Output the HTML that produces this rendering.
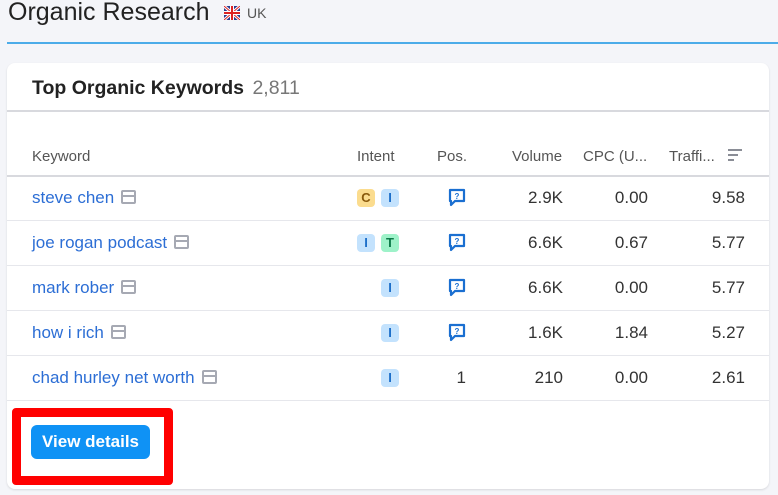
<!DOCTYPE html>
<html><head><style>
*{margin:0;padding:0;box-sizing:border-box}
body{width:778px;height:495px;background:#f4f5f9;font-family:"Liberation Sans",sans-serif;position:relative;overflow:hidden;color:#333}
.abs{position:absolute;white-space:nowrap}
.card{position:absolute;left:7px;top:63px;width:762px;height:426px;background:#fff;border-radius:8px;box-shadow:0 1px 2px rgba(0,0,0,.12)}
.kw{color:#2c6ed5;font-size:17px}
.ic{display:inline-block;width:15px;height:14px;border:2px solid #a6a9b3;border-radius:2px;vertical-align:-1px;margin-left:7px;position:relative}
.ic:after{content:"";position:absolute;left:0;right:0;top:3px;border-top:2px solid #a6a9b3}
.b{position:absolute;width:18px;height:18px;border-radius:4px;font-size:13px;font-weight:bold;text-align:center;line-height:18px}
.bI{background:#c3e2fd;color:#1d6fc9}
.bC{background:#fbdc8e;color:#8a5a0c}
.bT{background:#9ef2c9;color:#0b7a48}
.num{position:absolute;font-size:17px;color:#333;text-align:right}
.sep{position:absolute;left:7px;width:762px;height:1px;background:#e6e7ec}
.th{position:absolute;top:148px;font-size:15px;color:#555}
</style></head><body>
<div class="abs" style="left:8px;top:-2px;font-size:25px;color:#222">Organic Research</div>
<svg class="abs" style="left:224px;top:6px" width="16" height="14" viewBox="0 0 16 14"><rect width="16" height="14" fill="#2a3b8f"/><path d="M0 0L16 14M16 0L0 14" stroke="#fff" stroke-width="3"/><path d="M0 0L16 14M16 0L0 14" stroke="#d22" stroke-width="1"/><path d="M8 0V14M0 7H16" stroke="#fff" stroke-width="4"/><path d="M8 0V14M0 7H16" stroke="#d22" stroke-width="2"/></svg>
<div class="abs" style="left:247px;top:5px;font-size:14px;color:#555">UK</div>
<div class="abs" style="left:7px;top:42px;width:771px;height:2px;background:#4cace9"></div>
<div class="card"></div>
<div class="abs" style="left:32px;top:77px;font-size:19.5px;font-weight:bold;color:#222">Top Organic Keywords <span style="font-weight:normal;color:#777;margin-left:3px">2,811</span></div>
<div class="abs" style="left:7px;top:110px;width:762px;height:2px;background:#d8d9de"></div>
<div class="th" style="left:32px">Keyword</div>
<div class="th" style="left:357px">Intent</div>
<div class="th" style="left:437px">Pos.</div>
<div class="th" style="left:512px">Volume</div>
<div class="th" style="left:583px">CPC (U...</div>
<div class="th" style="left:669px">Traffi...</div>
<svg class="abs" style="left:728px;top:149px" width="14" height="12"><path d="M0 1H14M0 6H10M0 11H6" stroke="#8a8d96" stroke-width="2"/></svg>
<div class="abs" style="left:7px;top:175px;width:762px;height:2px;background:#d8d9de"></div>

<div class="sep" style="top:220px"></div>
<div class="sep" style="top:265px"></div>
<div class="sep" style="top:310px"></div>
<div class="sep" style="top:355px"></div>
<div class="sep" style="top:400px"></div>

<div class="abs kw" style="left:32px;top:188px">steve chen<span class="ic"></span></div>
<div class="abs kw" style="left:32px;top:233px">joe rogan podcast<span class="ic"></span></div>
<div class="abs kw" style="left:32px;top:278px">mark rober<span class="ic"></span></div>
<div class="abs kw" style="left:32px;top:323px">how i rich<span class="ic"></span></div>
<div class="abs kw" style="left:32px;top:368px">chad hurley net worth<span class="ic"></span></div>

<div class="b bC" style="left:357px;top:189px">C</div><div class="b bI" style="left:381px;top:189px">I</div>
<div class="b bI" style="left:357px;top:234px">I</div><div class="b bT" style="left:381px;top:234px">T</div>
<div class="b bI" style="left:381px;top:279px">I</div>
<div class="b bI" style="left:381px;top:324px">I</div>
<div class="b bI" style="left:381px;top:369px">I</div>

<svg class="abs" style="left:448px;top:188px" width="18" height="19" viewBox="0 0 18 19"><path d="M2 2H16V13H7L3 17V13H2Z" fill="none" stroke="#1a6fd1" stroke-width="2.2" stroke-linejoin="round"/><text x="9" y="11" font-size="8" font-weight="bold" fill="#1a6fd1" text-anchor="middle" font-family="Liberation Sans">?</text></svg>
<svg class="abs" style="left:448px;top:233px" width="18" height="19" viewBox="0 0 18 19"><path d="M2 2H16V13H7L3 17V13H2Z" fill="none" stroke="#1a6fd1" stroke-width="2.2" stroke-linejoin="round"/><text x="9" y="11" font-size="8" font-weight="bold" fill="#1a6fd1" text-anchor="middle" font-family="Liberation Sans">?</text></svg>
<svg class="abs" style="left:448px;top:278px" width="18" height="19" viewBox="0 0 18 19"><path d="M2 2H16V13H7L3 17V13H2Z" fill="none" stroke="#1a6fd1" stroke-width="2.2" stroke-linejoin="round"/><text x="9" y="11" font-size="8" font-weight="bold" fill="#1a6fd1" text-anchor="middle" font-family="Liberation Sans">?</text></svg>
<svg class="abs" style="left:448px;top:323px" width="18" height="19" viewBox="0 0 18 19"><path d="M2 2H16V13H7L3 17V13H2Z" fill="none" stroke="#1a6fd1" stroke-width="2.2" stroke-linejoin="round"/><text x="9" y="11" font-size="8" font-weight="bold" fill="#1a6fd1" text-anchor="middle" font-family="Liberation Sans">?</text></svg>
<div class="num" style="left:436px;width:30px;top:368px">1</div>

<div class="num" style="left:480px;width:83px;top:188px">2.9K</div>
<div class="num" style="left:480px;width:83px;top:233px">6.6K</div>
<div class="num" style="left:480px;width:83px;top:278px">6.6K</div>
<div class="num" style="left:480px;width:83px;top:323px">1.6K</div>
<div class="num" style="left:480px;width:83px;top:368px">210</div>

<div class="num" style="left:580px;width:68px;top:188px">0.00</div>
<div class="num" style="left:580px;width:68px;top:233px">0.67</div>
<div class="num" style="left:580px;width:68px;top:278px">0.00</div>
<div class="num" style="left:580px;width:68px;top:323px">1.84</div>
<div class="num" style="left:580px;width:68px;top:368px">0.00</div>

<div class="num" style="left:670px;width:75px;top:188px">9.58</div>
<div class="num" style="left:670px;width:75px;top:233px">5.77</div>
<div class="num" style="left:670px;width:75px;top:278px">5.77</div>
<div class="num" style="left:670px;width:75px;top:323px">5.27</div>
<div class="num" style="left:670px;width:75px;top:368px">2.61</div>

<div class="abs" style="left:12px;top:408px;width:161px;height:77px;border:9px solid #ff0000;border-radius:4px"></div>
<div class="abs" style="left:31px;top:425px;width:119px;height:34px;background:#0f92f5;border-radius:6px;color:#fff;font-size:17px;font-weight:bold;text-align:center;line-height:33px">View details</div>
</body></html>
